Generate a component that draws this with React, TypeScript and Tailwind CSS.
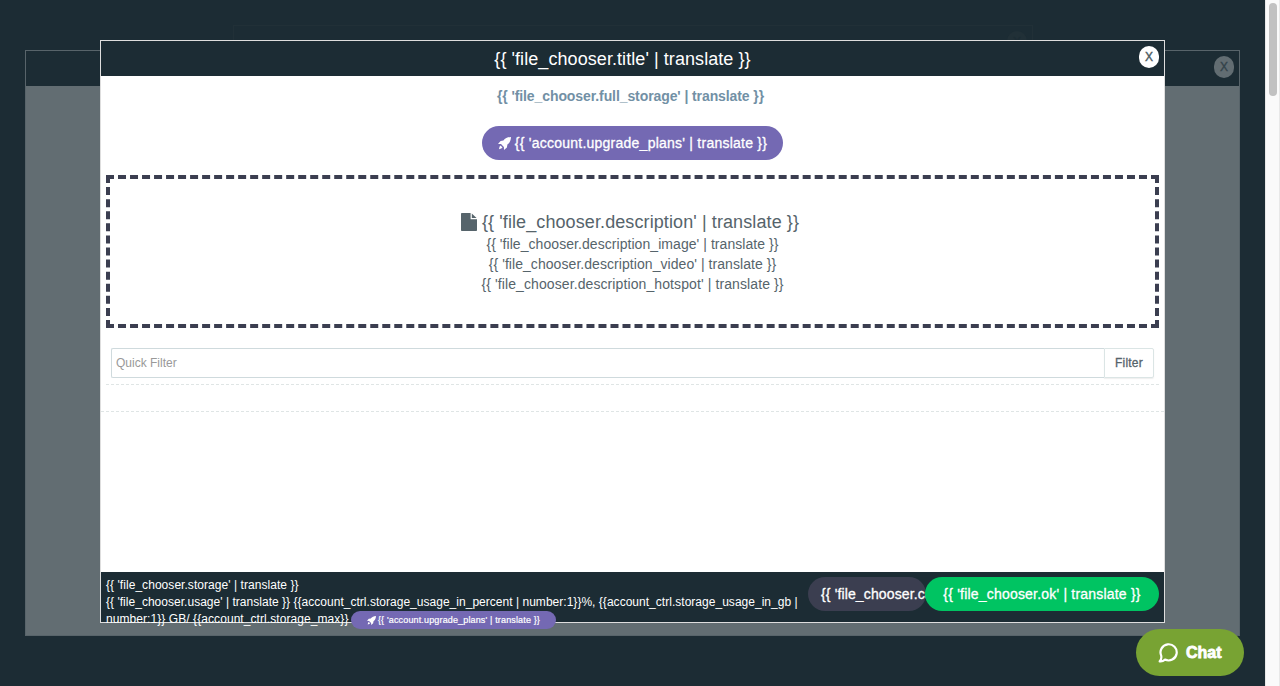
import React from "react";

function RocketIcon({ className }: { className: string }) {
  return (
    <svg viewBox="0 0 13 13" className={className} fill="currentColor">
      <path d="M13 0C9.8 0.1 7.2 1.2 5.4 3.6L2.6 4.1L0 6.9L3 7.1L5.9 10L6 13L8.9 10.5L9.4 7.6C11.8 5.8 12.9 3.2 13 0Z" />
      <path d="M2.6 8.5L4.5 10.4L3.2 11.6L1 12.2L1.5 9.8Z" />
    </svg>
  );
}

function FileIcon({ className }: { className: string }) {
  return (
    <svg viewBox="0 0 16 18" className={className} fill="currentColor">
      <path d="M0.8 0H9.6V6.2H16V17.2Q16 18 15.2 18H0.8Q0 18 0 17.2V0.8Q0 0 0.8 0Z" />
      <path d="M10.8 0.4L15.6 5.1H10.8Z" />
    </svg>
  );
}

function CloseButton({ className }: { className: string }) {
  return (
    <button className={`flex h-[22px] w-5 shrink-0 items-center justify-center rounded-full text-[12px] leading-none [-webkit-text-stroke:0.4px] ${className}`}>
      X
    </button>
  );
}

function BackgroundModals() {
  return (
    <>
      <div className="absolute left-[233px] top-[25px] h-[200px] w-[800px] overflow-hidden border border-[#213037]">
        <div className="flex items-start justify-end pr-[5px] pt-[5px]">
          <CloseButton className="bg-[#213037] text-[#1c2c34]" />
        </div>
      </div>
      <div className="absolute left-[25px] top-[50px] flex h-[586px] w-[1215px] flex-col border border-[#58646a] bg-[#626d72]">
        <div className="flex h-[35px] shrink-0 items-start justify-end bg-[#1c2c34] pr-[5px] pt-[5px]">
          <CloseButton className="bg-[#626d72] text-[#34434a]" />
        </div>
      </div>
    </>
  );
}

function DropZone() {
  return (
    <div className="mx-[5px] mt-[15px] flex h-[153px] shrink-0 flex-col items-center border-4 border-dashed border-[#3b3e50] pt-8 text-[14px] leading-5 text-[#56646b]">
      <div className="flex h-[23px] items-center whitespace-pre pb-[2px] pr-[5px] text-[18px] tracking-[0.1px]">
        <FileIcon className="mr-[5px] h-[18px] w-4" />
        <span>{"{{ 'file_chooser.description' | translate }}"}</span>
      </div>
      <div className="tracking-[0.06px]">{"{{ 'file_chooser.description_image' | translate }}"}</div>
      <div className="tracking-[0.06px]">{"{{ 'file_chooser.description_video' | translate }}"}</div>
      <div className="tracking-[0.1px]">{"{{ 'file_chooser.description_hotspot' | translate }}"}</div>
    </div>
  );
}

function Footer() {
  return (
    <footer className="flex h-[50px] shrink-0 items-start bg-[#1c2c34] px-[5px] pt-[5px] text-white">
      <div className="w-[702px] shrink-0 text-[12px] leading-[17px]">
        <div className="whitespace-nowrap tracking-[0.05px]">{"{{ 'file_chooser.storage' | translate }}"}</div>
        <div className="whitespace-nowrap tracking-[0.025px]">
          {"{{ 'file_chooser.usage' | translate }} {{account_ctrl.storage_usage_in_percent | number:1}}%, {{account_ctrl.storage_usage_in_gb |"}
        </div>
        <div className="flex items-start whitespace-nowrap">
          <span className="w-[245px] tracking-[0.07px]">{"number:1}} GB/ {{account_ctrl.storage_max}}"}</span>
          <button className="relative flex h-[18px] w-[205px] shrink-0 items-center justify-center rounded-full bg-[#7469b3] text-[9px] leading-none tracking-[0.15px] [-webkit-text-stroke:0.2px]">
            <RocketIcon className="mr-0.5 h-[9px] w-[9px]" />
            <span>{"{{ 'account.upgrade_plans' | translate }}"}</span>
          </button>
        </div>
      </div>
      <button className="h-[34px] w-[118px] shrink-0 overflow-hidden whitespace-nowrap rounded-full bg-[#3b3e50] pl-[13px] text-left text-[14px] tracking-[0.13px] [-webkit-text-stroke:0.3px]">
        {"{{ 'file_chooser.cancel' | translate }}"}
      </button>
      <button className="-ml-px h-[34px] w-[234px] shrink-0 whitespace-nowrap rounded-full bg-[#00c462] text-[14px] tracking-[0.2px] [-webkit-text-stroke:0.3px]">
        {"{{ 'file_chooser.ok' | translate }}"}
      </button>
    </footer>
  );
}

function FileChooser() {
  return (
    <section className="absolute left-[100px] top-10 flex h-[583px] w-[1065px] flex-col border border-[#dedede] bg-white">
      <header className="flex h-[35px] shrink-0 items-start bg-[#1c2c34] pr-[5px] pt-[5px] text-white">
        <h1 className="flex-1 pl-[5px] text-center text-[18px] leading-[26px] tracking-[0.07px]">{"{{ 'file_chooser.title' | translate }}"}</h1>
        <CloseButton className="bg-white text-[#4b5a61]" />
      </header>
      <p className="mt-[10px] h-5 shrink-0 pr-1 text-center text-[14px] font-bold leading-5 tracking-[-0.09px] text-[#7290a5]">
        {"{{ 'file_chooser.full_storage' | translate }}"}
      </p>
      <button className="mx-auto mt-5 flex h-[34px] w-[301px] shrink-0 items-center justify-center whitespace-nowrap rounded-full bg-[#7469b3] text-[14px] tracking-[0.24px] text-white [-webkit-text-stroke:0.3px]">
        <RocketIcon className="mr-1 h-[13px] w-[13px]" />
        <span>{"{{ 'account.upgrade_plans' | translate }}"}</span>
      </button>
      <DropZone />
      <div className="mx-[5px] flex h-[57px] shrink-0 items-start border-b border-dashed border-[#dfe5e5] px-[5px] pt-5">
        <input
          className="h-[30px] min-w-0 flex-1 rounded-l-[2px] border border-r-0 border-[#cfdadd] bg-white px-1 text-[12px] text-[#56646b] outline-none placeholder:text-[#999999]"
          placeholder="Quick Filter"
        />
        <button className="h-[30px] w-[50px] rounded-r-[2px] border border-[#dbe5e5] text-[12px] tracking-[0.2px] text-[#56646b] shadow-[0_1px_1px_rgba(90,90,90,0.1)] [-webkit-text-stroke:0.3px]">
          Filter
        </button>
      </div>
      <div className="h-[27px] shrink-0 border-b border-dashed border-[#dfe5e5]" />
      <div className="flex-1" />
      <Footer />
    </section>
  );
}

export default function App() {
  return (
    <div className="flex h-[686px] w-[1280px] overflow-hidden bg-[#1c2c34] font-['Liberation_Sans',Arial,sans-serif]">
      <main className="relative h-full flex-1">
        <BackgroundModals />
        <FileChooser />
        <button className="absolute left-[1136px] top-[629px] flex h-[47px] w-[108px] items-center rounded-full bg-[#78a333] pl-[22px] text-[16px] font-bold text-white [-webkit-text-stroke:0.8px]">
          <svg viewBox="0 0 20 20" className="mr-2 h-5 w-5" fill="none" stroke="currentColor" strokeWidth="2.2" strokeLinejoin="round">
            <path d="M3.2 12.6A8.1 8.1 0 1 1 7 16.6C5.5 17.9 3.5 18.6 1.7 18.3C3 17 3.6 14.6 3.2 12.6Z" />
          </svg>
          Chat
        </button>
      </main>
      <div className="flex h-full w-[15px] justify-center border-x border-[#e8e8e8] bg-[#fafafa] pt-[3px]">
        <div className="h-[93px] w-2 rounded-full bg-[#c1c1c1]" />
      </div>
    </div>
  );
}
